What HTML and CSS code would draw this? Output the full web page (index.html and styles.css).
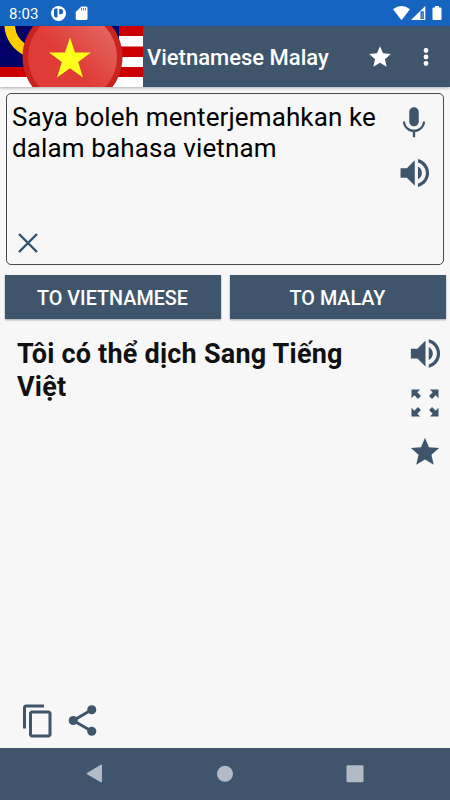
FILE: index.html
```
<!DOCTYPE html>
<html lang="en">
<head>
<meta charset="utf-8">
<meta name="viewport" content="width=device-width, initial-scale=1">
<title>Vietnamese Malay</title>
<link rel="stylesheet" href="styles.css">
</head>
<body>

<div class="status">
  <span class="clock">8:03</span>
  <svg class="status-left" width="44" height="26" viewBox="0 0 44 26">
    <circle cx="8.500" cy="13.500" r="7.500" fill="#fff"/>
    <path d="M5.500 8.500h2v9h-1a2.500 2.500 0 0 1-2.500-2.500v-5a1.500 1.500 0 0 1 1.500-1.500z" fill="#1565c0"/>
    <path d="M9.200 9h1.300a2.600 2.600 0 0 1 0 5.200H9.200z" fill="#1565c0"/>
    <path d="M31.500 6.500H36a1.500 1.500 0 0 1 1.500 1.500v10.500A1.500 1.500 0 0 1 36 20h-9a1.500 1.500 0 0 1-1.300-1.500V12z" fill="#fff"/>
    <path d="M31.500 8v2.500M33.500 8v2.500M35.500 8v2.500" stroke="#1565c0" stroke-width=".8"/>
  </svg>
  <svg class="status-right" width="50" height="26" viewBox="0 0 50 26">
    <path d="M1 9.300Q9.500 2.700 18 9.300L9.500 20.200z" fill="#fff"/>
    <path d="M33.300 6v14H19z" fill="#fff"/>
    <path d="M28.500 11.300h3.300v7.700h-3.300z" fill="#1565c0"/>
    <path d="M29.600 12.500h1.100v6h-1.100z" fill="#fff" opacity=".4"/>
    <path d="M43 6h4v1.500h1.500a1 1 0 0 1 1 1v10.500a1 1 0 0 1-1 1h-7a1 1 0 0 1-1-1V8.500a1 1 0 0 1 1-1H43z" fill="#fff"/>
  </svg>
</div>

<header>
  <svg class="flag" width="143" height="61" viewBox="0 0 143 61">
    <defs>
      <linearGradient id="shine" x1="0" y1="1" x2="1" y2="0">
        <stop offset=".45" stop-color="#e03c37"/>
        <stop offset="1" stop-color="#e4726c"/>
      </linearGradient>
    </defs>
    <path d="M0 0h143v61H0z" fill="#fff"/>
    <path d="M100 0h43v10h-43zM100 20.500h43v10.500h-43zM100 41h43v10h-43zM0 41h60v10H0z" fill="#c00"/>
    <path d="M0 0h119v41H0z" fill="#006"/>
    <path d="M9.500 -2C10 9 14 18 27 25" fill="none" stroke="#fc0" stroke-width="10.500"/>
    <circle cx="72.500" cy="31" r="50" fill="#c9231e"/>
    <circle cx="72.500" cy="31" r="44.500" fill="url(#shine)"/>
    <path d="M70 11.500l5 15h16L78.200 36l4.800 15.500L70 42.300 57 51.500 61.800 36 49 26.500h16z" fill="#ffff1e"/>
  </svg>
  <h1>Vietnamese Malay</h1>
  <svg class="fav" width="26" height="26" viewBox="0 0 24 24"><path d="M12 17.270L18.180 21l-1.640-7.030L22 9.240l-7.190-.61L12 2 9.190 8.630 2 9.240l5.460 4.730L5.820 21z"/></svg>
  <svg class="more" width="6" height="20" viewBox="0 0 6 20"><circle cx="3" cy="3.500" r="2.400"/><circle cx="3" cy="10" r="2.400"/><circle cx="3" cy="16.500" r="2.400"/></svg>
</header>

<main>
  <section class="source">
    <div class="source-text">
      <p>Saya boleh menterjemahkan ke dalam bahasa vietnam</p>
      <svg class="clear" width="20" height="20" viewBox="0 0 20 20"><path d="M1 1l18 18M19 1L1 19"/></svg>
    </div>
    <div class="source-tools">
      <svg width="38" height="38" viewBox="0 0 24 24"><path d="M12 14c1.660 0 3-1.340 3-3V5c0-1.660-1.340-3-3-3S9 3.340 9 5v6c0 1.660 1.340 3 3 3zM17.600 11c0 3-2.540 5.100-5.600 5.100S6.400 14 6.400 11H5c0 3.410 2.720 6.230 6.250 6.720V21h1.500v-3.280C16.280 17.230 19 14.410 19 11z"/></svg>
      <svg width="38" height="38" viewBox="0 0 24 24"><path d="M3.500 9v6h4l5 5V4l-5 5h-4zM17 12c0-1.770-1.020-3.290-2.500-4.030v8.050c1.480-.73 2.500-2.250 2.500-4.020zM14.500 3.230v2.060c2.890.86 5 3.540 5 6.710s-2.110 5.850-5 6.710v2.060c4.010-.91 7-4.490 7-8.770s-2.990-7.860-7-8.770z"/></svg>
    </div>
  </section>

  <div class="buttons">
    <button type="button">TO VIETNAMESE</button>
    <button type="button">TO MALAY</button>
  </div>

  <section class="result">
    <p lang="vi">Tôi có thể dịch Sang Tiếng Việt</p>
    <div class="result-tools">
      <svg width="39" height="39" viewBox="0 0 24 24"><path d="M3 9v6h4l5 5V4L7 9H3zm13.500 3c0-1.770-1.020-3.290-2.500-4.030v8.050c1.480-.73 2.500-2.250 2.500-4.020zM14 3.230v2.060c2.890.86 5 3.540 5 6.710s-2.110 5.850-5 6.710v2.060c4.010-.91 7-4.490 7-8.770s-2.990-7.860-7-8.770z"/></svg>
      <svg width="36" height="36" viewBox="0 0 24 24"><path d="M3 3h5.800L6.900 4.900 9.300 7.300 7.300 9.300 4.900 6.900 3 8.800zM21 3h-5.800l1.900 1.900-2.400 2.400 2 2 2.400-2.400L21 8.800zM3 21h5.800l-1.900-1.900 2.400-2.400-2-2-2.400 2.400L3 15.200zM21 21h-5.800l1.900-1.900-2.400-2.400 2-2 2.400 2.400 1.900-1.900z"/></svg>
      <svg width="34" height="34" viewBox="0 0 24 24"><path d="M12 17.270L18.180 21l-1.640-7.030L22 9.240l-7.190-.61L12 2 9.190 8.630 2 9.240l5.460 4.730L5.820 21z"/></svg>
    </div>
  </section>

  <div class="actions">
    <svg width="36" height="36" viewBox="0 0 24 24"><path d="M16 1H4c-1.100 0-2 .9-2 2v14h2V3h12V1zm3 4H8c-1.100 0-2 .9-2 2v14c0 1.100.9 2 2 2h11c1.100 0 2-.9 2-2V7c0-1.100-.9-2-2-2zm0 16H8V7h11v14z"/></svg>
    <svg width="37" height="37" viewBox="0 0 24 24"><path d="M18 5L6 12l12 7" fill="none" stroke="#3e556c" stroke-width="1.900"/><circle cx="18" cy="5" r="2.950"/><circle cx="6" cy="12" r="2.950"/><circle cx="18" cy="19" r="2.950"/></svg>
  </div>
</main>

<nav>
  <svg width="18" height="20" viewBox="0 0 18 20"><path d="M16 1.500v16a.8.800 0 0 1-1.200.7L1 10.300a.8.800 0 0 1 0-1.300L14.800.8A.8.800 0 0 1 16 1.500z"/></svg>
  <svg width="18" height="20" viewBox="0 0 18 20"><circle cx="9" cy="9.800" r="8"/></svg>
  <svg width="18" height="20" viewBox="0 0 18 20"><rect x=".5" y="1.200" width="17" height="17" rx="1.200"/></svg>
</nav>

</body>
</html>
```
FILE: styles.css
```
* {
  box-sizing: border-box;
}

body {
  margin: 0;
  height: 800px;
  display: flex;
  flex-direction: column;
  overflow: hidden;
  font-family: Roboto, sans-serif;
  background-color: #f7f7f7;
  color: #111;
}

svg {
  display: block;
  flex: none;
}

p, h1 {
  margin: 0;
}

/* Status bar */
.status {
  height: 26px;
  flex: none;
  display: flex;
  align-items: center;
  padding: 0 8px 0 9px;
  background-color: #1565c0;
  color: #fff;
}

.clock {
  width: 41px;
  padding-top: 2px;
  font-size: 15px;
  line-height: 24px;
  letter-spacing: 0.2px;
}

.status-right {
  margin-left: auto;
}

header {
  height: 61px;
  flex: none;
  display: flex;
  align-items: center;
  padding-right: 21px;
  background-color: #3e556c;
  box-shadow: 0 1px 3px rgba(0,0,0,0.3);
}

header h1 {
  flex: 1;
  padding: 3px 0 0 4px;
  font-size: 22px;
  font-weight: 500;
  line-height: 30px;
  color: #fff;
  white-space: nowrap;
}

header svg {
  fill: #fff;
}

.fav {
  margin-right: 30px;
}

main {
  flex: 1;
  display: flex;
  flex-direction: column;
  padding: 6px 4px 9px;
}

main svg {
  fill: #3e556c;
}

/* Text to translate */
.source {
  height: 172px;
  display: flex;
  margin: 0 2px;
  padding: 8px 10px 11px 5px;
  border: 1px solid #4a4a4a;
  border-radius: 5px;
}

.source-text {
  flex: 1;
  display: flex;
  flex-direction: column;
  justify-content: space-between;
}

.source-text p {
  font-size: 26px;
  line-height: 31px;
  letter-spacing: 0.12px;
  color: #000;
}

.source-text .clear {
  margin-left: 6px;
  fill: none;
  stroke: #2f506c;
  stroke-width: 2.4;
}

.source-tools {
  display: flex;
  flex-direction: column;
  gap: 12px;
  padding-top: 2px;
}

.buttons {
  display: grid;
  grid-template-columns: 1fr 1fr;
  gap: 9px;
  margin: 10px 0.5px 0;
}

button {
  height: 43.5px;
  padding: 3px 0 0 0;
  border: none;
  background-color: #3e556c;
  font: 500 19.8px Roboto, sans-serif;
  color: #fff;
  box-shadow: 0 1px 2px rgba(0,0,0,0.35);
}

/* Translation */
.result {
  flex: 1;
  display: flex;
  justify-content: space-between;
  padding: 15.5px 1.5px 0 13px;
}

.result p {
  width: 350px;
  padding-top: 4px;
  font-size: 27px;
  font-weight: bold;
  line-height: 32.5px;
  letter-spacing: 0.22px;
}

.result-tools {
  display: flex;
  flex-direction: column;
  align-items: center;
  gap: 12px;
}

.result-tools svg:last-child {
  margin-top: 2px;
}

.actions {
  display: flex;
  align-items: center;
  gap: 8px;
  padding-left: 16px;
}

nav {
  height: 52px;
  flex: none;
  display: flex;
  justify-content: space-between;
  align-items: center;
  padding: 0 86px;
  background-color: #3e556c;
}

nav svg {
  fill: #b1bbc6;
}
```
